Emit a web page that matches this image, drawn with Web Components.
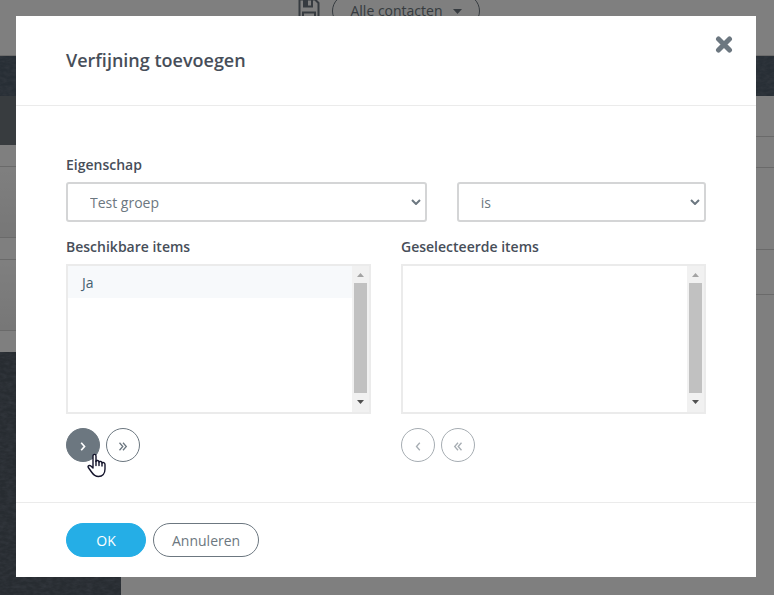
<!DOCTYPE html>
<html lang="nl">
<head>
<meta charset="utf-8">
<title>Verfijning toevoegen</title>
<style>
  :root {
    --color-text: #474e59;
    --color-muted: #6c7780;
    --color-primary: #25aee6;
    --color-line: #ebebeb;
    --color-field: #d4d5d6;
  }

  body {
    margin: 0;
    height: 100vh;
    overflow: hidden;
    font: 14px/20px "Open Sans", sans-serif;
    color: var(--color-text);
  }
</style>
</head>
<body>
  <contacts-page></contacts-page>

  <modal-dialog heading="Verfijning toevoegen">
    <refinement-form></refinement-form>
    <pill-button slot="actions" variant="primary">OK</pill-button>
    <pill-button slot="actions">Annuleren</pill-button>
  </modal-dialog>

<script>
/**
 * Small base class: renders the template once into an open shadow root
 */
class BaseElement extends HTMLElement {
  constructor() {
    super();
    this.attachShadow({ mode: 'open' });
  }

  connectedCallback() {
    this.shadowRoot.innerHTML = this.template();
  }
}

/**
 * The contacts page behind the dialog
 */
class ContactsPage extends BaseElement {
  template() {
    return `
      <style>
        :host {
          display: flex;
          flex-direction: column;
          height: 100%;
          background: #ffffff;
        }

        header {
          display: flex;
          align-items: flex-start;
          justify-content: center;
          gap: 12px;
          box-sizing: border-box;
          height: 56px;
          padding-left: 4px;
          border-bottom: 1px solid #d8d8d8;
        }

        header svg.save {
          flex: none;
          margin-top: -2px;
        }

        header button {
          display: flex;
          align-items: center;
          gap: 10px;
          box-sizing: border-box;
          height: 34px;
          margin-top: -6px;
          padding: 0 17px;
          border: 1px solid #6c7780;
          border-radius: 17px;
          background: none;
          font: inherit;
          color: #6c7780;
        }

        .texture {
          background: #4f5d6b;
          overflow: hidden;
        }

        .texture svg {
          display: block;
          width: 100%;
          height: 100%;
        }

        .band {
          flex: none;
          height: 40px;
        }

        .columns {
          flex: 1;
          display: flex;
          min-height: 0;
        }

        aside {
          display: flex;
          flex-direction: column;
          width: 121px;
        }

        .active {
          height: 49px;
          background: #70797f;
        }

        .item {
          height: 21px;
          border-bottom: 1px solid #d4d4d4;
        }

        .panel {
          height: 70px;
          border-bottom: 1px solid #d4d4d4;
          background: linear-gradient(#ffffff, #eeeeee);
        }

        .tail {
          border-bottom: 0;
        }

        aside .texture {
          flex: 1;
          min-height: 0;
          background: #4f5862;
        }

        main {
          flex: 1;
        }

        main div {
          box-sizing: border-box;
          border-bottom: 1px solid #d4d4d4;
        }

        .row-s { height: 31px; }
        .row-m { height: 41px; }
        .row-l { height: 45px; }
        .row-xl { height: 82px; }
      </style>

      <header>
        <svg class="save" width="22" height="22" viewBox="0 0 22 22" fill="none" stroke="#6c7780" stroke-width="2">
          <path d="M1.500 1.500H17L20.500 5V20.500H1.500Z"/>
          <path d="M6 1.500V8.500H14V1.500M5 20V14.500H17V20"/>
          <path d="M7 2H10V8H7Z" fill="#6c7780" stroke="none"/>
        </svg>
        <button type="button">
          Alle contacten
          <svg width="9" height="5" viewBox="0 0 9 5" fill="#6c7780"><path d="M0 0H9L4.500 5Z"/></svg>
        </button>
      </header>
      <div class="texture band">${this.texture('band-noise')}</div>
      <div class="columns">
        <aside>
          <div class="active"></div>
          <div class="item"></div>
          <div class="panel"></div>
          <div class="item"></div>
          <div class="panel"></div>
          <div class="item tail"></div>
          <div class="texture">${this.texture('side-noise')}</div>
        </aside>
        <main>
          <div class="row-m"></div>
          <div class="row-s"></div>
          <div class="row-xl"></div>
          <div class="row-l"></div>
        </main>
      </div>
    `;
  }

  // Woven, slightly grainy surface
  texture(id) {
    return `
      <svg aria-hidden="true">
        <filter id="${id}" x="0" y="0" width="100%" height="100%">
          <feTurbulence type="fractalNoise" baseFrequency="0.15 0.3" numOctaves="3" seed="4"/>
          <feColorMatrix values="0 0 0 0 0.16  0 0 0 0 0.19  0 0 0 0 0.24  1.2 0 0 0 -0.4"/>
        </filter>
        <rect width="100%" height="100%" filter="url(#${id})"/>
      </svg>
    `;
  }
}

/**
 * Dialog with a heading, a default slot and an "actions" slot
 */
class ModalDialog extends BaseElement {
  template() {
    return `
      <style>
        :host {
          position: fixed;
          inset: 0;
          box-sizing: border-box;
          padding: 16px 18px 18px 16px;
          background: rgba(0, 0, 0, 0.5);
        }

        .dialog {
          background: #ffffff;
        }

        header {
          display: flex;
          align-items: flex-start;
          justify-content: space-between;
          padding: 20px 23px 20px 50px;
          border-bottom: 1px solid var(--color-line);
        }

        h2 {
          margin: 12px 0;
          font-size: 18px;
          line-height: 25px;
          font-weight: 600;
        }

        .close {
          display: flex;
          padding: 0;
          border: 0;
          background: none;
          cursor: pointer;
        }

        .body {
          padding: 49px 50px 40px;
        }

        footer {
          display: flex;
          gap: 7px;
          padding: 20px 50px;
          border-top: 1px solid var(--color-line);
        }
      </style>

      <div class="dialog" role="dialog" aria-modal="true" aria-labelledby="heading">
        <header>
          <h2 id="heading">${this.getAttribute('heading')}</h2>
          <button class="close" type="button" aria-label="Sluiten">
            <svg width="18" height="17" viewBox="0 0 18 17" stroke="#6c7780" stroke-width="5" stroke-linecap="round">
              <path d="M3.500 3L14.500 14M14.500 3L3.500 14"/>
            </svg>
          </button>
        </header>
        <div class="body"><slot></slot></div>
        <footer><slot name="actions"></slot></footer>
      </div>
    `;
  }
}

/**
 * Rounded footer button
 */
class PillButton extends BaseElement {
  template() {
    return `
      <style>
        :host {
          display: block;
        }

        button {
          height: 34px;
          min-width: 80px;
          padding: 2px 18px 0;
          border: 1px solid var(--color-muted);
          border-radius: 17px;
          background: #ffffff;
          font: inherit;
          color: var(--color-muted);
          cursor: pointer;
        }

        :host([variant="primary"]) button {
          border-color: var(--color-primary);
          background: var(--color-primary);
          color: #ffffff;
        }
      </style>
      <button type="button"><slot></slot></button>
    `;
  }
}

/**
 * Round button that moves items between the lists
 */
class MoveButton extends BaseElement {
  template() {
    const disabled = this.hasAttribute('disabled') ? 'disabled' : '';

    return `
      <style>
        :host {
          display: block;
        }

        button {
          display: flex;
          align-items: center;
          justify-content: center;
          box-sizing: border-box;
          width: 34px;
          height: 34px;
          padding: 3px 0 0;
          border: 1px solid var(--color-muted);
          border-radius: 50%;
          background: #ffffff;
          color: var(--color-muted);
          cursor: pointer;
        }

        button:disabled {
          opacity: 0.6;
          cursor: default;
        }

        :host([active]) button {
          background: var(--color-muted);
          color: #ffffff;
        }

        :host([active]) svg {
          stroke-width: 1.700;
        }
      </style>
      <button type="button" aria-label="${this.getAttribute('label')}" ${disabled}>
        ${this.icon(this.getAttribute('icon'))}
      </button>
    `;
  }

  icon(name) {
    const paths = {
      right: 'M3.200 .8L6.500 4.500L3.200 8.200',
      left: 'M6.800 .8L3.500 4.500L6.800 8.200',
      'double-right': 'M1.500 .8L4.800 4.500L1.500 8.200M5 .8L8.300 4.500L5 8.200',
      'double-left': 'M5 .8L1.700 4.500L5 8.200M8.500 .8L5.200 4.500L8.500 8.200',
    };

    return `
      <svg width="10" height="9" viewBox="0 0 10 9" fill="none" stroke="currentColor" stroke-width="1.300">
        <path d="${paths[name]}"/>
      </svg>
    `;
  }
}

/**
 * Drop-down with an optional label above it
 */
class SelectField extends BaseElement {
  template() {
    const label = this.getAttribute('label');
    const labelHTML = label
      ? `<label for="field">${label}</label>`
      : '';

    return `
      <style>
        :host {
          display: block;
        }

        label {
          display: block;
          margin-bottom: 7px;
          font-weight: 600;
        }

        .field {
          display: grid;
          align-items: center;
        }

        select,
        .field svg {
          grid-area: 1 / 1;
        }

        select {
          appearance: none;
          box-sizing: border-box;
          width: 100%;
          height: 40px;
          padding: 2px 22px 0;
          border: 2px solid var(--color-field);
          border-radius: 3px;
          background: #ffffff;
          font: inherit;
          color: var(--color-muted);
        }

        .field svg {
          justify-self: end;
          margin-right: 6px;
          pointer-events: none;
        }
      </style>
      ${labelHTML}
      <div class="field">
        <select id="field" aria-label="${label || 'Voorwaarde'}">
          <option>${this.getAttribute('value')}</option>
        </select>
        <svg width="10" height="6" viewBox="0 0 10 6" fill="none" stroke="#6c7780" stroke-width="2">
          <path d="M1 1L5 5L9 1"/>
        </svg>
      </div>
    `;
  }
}

/**
 * Labelled list box with a classic scrollbar and its buttons slotted below
 */
class ItemList extends BaseElement {
  template() {
    const items = (this.getAttribute('items') || '').split(',').filter(Boolean);
    const options = items.map((item) => `<option>${item}</option>`).join('');

    return `
      <style>
        :host {
          display: block;
        }

        label {
          display: block;
          margin-bottom: 7px;
          font-weight: 600;
        }

        .frame {
          display: flex;
          box-sizing: border-box;
          height: 150px;
          border: 2px solid var(--color-line);
        }

        select {
          flex: 1;
          min-width: 0;
          padding: 0;
          border: 0;
          border-radius: 0;
          outline: 0;
          background: #ffffff;
          font: inherit;
          color: #44606f;
          overflow: hidden;
        }

        option {
          min-height: 0;
          padding: 7px 14px 6px;
          line-height: 20px;
          background: #f7f9fb;
        }

        .scrollbar {
          display: flex;
          flex-direction: column;
          align-items: center;
          width: 17px;
          background: #f1f1f1;
        }

        .arrow {
          display: flex;
          align-items: center;
          height: 17px;
        }

        .thumb {
          width: 13px;
          height: 110px;
          background: #c1c1c1;
        }

        .buttons {
          display: flex;
          gap: 6px;
          margin-top: 14px;
        }
      </style>
      <label for="list">${this.getAttribute('label')}</label>
      <div class="frame">
        <select id="list" multiple size="4">${options}</select>
        <div class="scrollbar" aria-hidden="true">
          <div class="arrow">
            <svg width="7" height="4" viewBox="0 0 7 4" fill="#a3a3a3"><path d="M0 4L3.500 0L7 4Z"/></svg>
          </div>
          <div class="thumb"></div>
          <div class="arrow">
            <svg width="7" height="4" viewBox="0 0 7 4" fill="#505050"><path d="M0 0L3.500 4L7 0Z"/></svg>
          </div>
        </div>
      </div>
      <div class="buttons"><slot></slot></div>
    `;
  }
}

/**
 * Hand pointer drawn over the hovered button
 */
class HandPointer extends BaseElement {
  template() {
    return `
      <style>
        :host {
          position: absolute;
          left: 21px;
          top: 25px;
          pointer-events: none;
        }

        svg {
          display: block;
        }
      </style>
      <svg width="19" height="25" viewBox="0 0 19 25" fill="#ffffff" stroke="#14142b" stroke-width="1.400" stroke-linejoin="round" stroke-linecap="round">
        <path d="M6 15V3C6 .8 9 .8 9 3V8.500C9.600 7 12 7.300 12 9C12.800 7.900 15 8.300 15 10C15.900 9.200 18 9.500 18 11.500V16C18 20.500 15.500 23.500 11.500 23.500C8 23.500 6.500 22 4.500 19L1.300 14.500C.4 12.700 2.500 11.800 3.900 13Z"/>
        <path d="M9 8V12.500M12 9V12.500M15 10V13" fill="none"/>
      </svg>
    `;
  }
}

/**
 * Form that builds one refinement
 */
class RefinementForm extends BaseElement {
  template() {
    return `
      <style>
        :host {
          display: block;
        }

        form {
          display: grid;
          grid-template-columns: repeat(12, minmax(0, 1fr));
          gap: 15px 30px;
          align-items: end;
        }

        .property { grid-column: span 7; }
        .operator { grid-column: span 5; }
        item-list { grid-column: span 6; }

        .hovered {
          position: relative;
        }
      </style>
      <form>
        <select-field class="property" label="Eigenschap" value="Test groep"></select-field>
        <select-field class="operator" value="is"></select-field>
        <item-list label="Beschikbare items" items="Ja">
          <div class="hovered">
            <move-button active icon="right" label="Toevoegen"></move-button>
            <hand-pointer></hand-pointer>
          </div>
          <move-button icon="double-right" label="Alles toevoegen"></move-button>
        </item-list>
        <item-list label="Geselecteerde items">
          <move-button disabled icon="left" label="Verwijderen"></move-button>
          <move-button disabled icon="double-left" label="Alles verwijderen"></move-button>
        </item-list>
      </form>
    `;
  }
}

customElements.define('contacts-page', ContactsPage);
customElements.define('modal-dialog', ModalDialog);
customElements.define('pill-button', PillButton);
customElements.define('move-button', MoveButton);
customElements.define('select-field', SelectField);
customElements.define('item-list', ItemList);
customElements.define('hand-pointer', HandPointer);
customElements.define('refinement-form', RefinementForm);
</script>
</body>
</html>
